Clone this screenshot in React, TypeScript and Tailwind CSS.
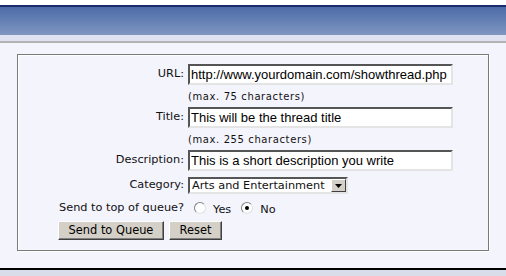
import React from 'react';

const inputCls =
  "h-[21px] w-[265px] border-2 border-t-[#555] border-l-[#555] border-b-[#e4e4e4] border-r-[#e4e4e4] bg-white px-[1px] text-[13px] leading-none text-black outline-none font-['Liberation_Sans',Arial,sans-serif]";

const btnCls =
  "h-[19px] border border-t-white border-l-white border-b-[#404040] border-r-[#404040] bg-[#d4d0c8] text-[11.4px] text-black shadow-[inset_-1px_-1px_0_#808080] font-['DejaVu_Sans',Verdana,sans-serif]";

const Radio = ({ checked }: { checked?: boolean }) => (
  <span className="relative inline-block h-[12px] w-[12px] rounded-full border border-t-[#808080] border-l-[#808080] border-b-[#e0e0e0] border-r-[#e0e0e0] bg-white">
    {checked && <span className="absolute left-[3px] top-[3px] h-[4px] w-[4px] rounded-full bg-black" />}
  </span>
);

const App: React.FC = () => {
  return (
    <div className="flex h-[276px] w-[506px] flex-col overflow-hidden bg-[#f4f4fd] font-['DejaVu_Sans',Verdana,sans-serif] text-[11.3px] text-[#111]">
      {/* header band */}
      <div className="h-[5px] bg-white" />
      <div className="h-[2px] bg-[#1c2c6c]" />
      <div className="h-[28px] bg-gradient-to-b from-[#4d6ba8] to-[#7f96c1]" />
      <div className="h-[6px] bg-[#dfe2f1]" />
      <div className="h-[2px] bg-[#b3b3b3]" />

      <div className="px-[17px] pt-[11px]">
        <div className="h-[197px] border border-[#7a7a7a] shadow-[inset_1px_1px_0_#fff,1px_1px_0_#fff] pl-[40px] pt-[9px]">
          {/* URL */}
          <div className="flex items-center gap-[4px]">
            <span className="w-[126px] text-right">URL:</span>
            <input className={inputCls} defaultValue="http://www.yourdomain.com/showthread.php" />
          </div>
          <div className="flex h-[22px] items-center gap-[4px]">
            <span className="w-[126px]" />
            <span className="text-[10px] tracking-[0.6px]">(max. 75 characters)</span>
          </div>
          {/* Title */}
          <div className="flex items-center gap-[4px]">
            <span className="w-[126px] text-right">Title:</span>
            <input className={inputCls} defaultValue="This will be the thread title" />
          </div>
          <div className="flex h-[22px] items-center gap-[4px]">
            <span className="w-[126px]" />
            <span className="text-[10px] tracking-[0.6px]">(max. 255 characters)</span>
          </div>
          {/* Description */}
          <div className="flex items-center gap-[4px]">
            <span className="w-[126px] text-right">Description:</span>
            <input className={inputCls} defaultValue="This is a short description you write" />
          </div>
          {/* Category */}
          <div className="mt-[6px] flex items-center gap-[4px]">
            <span className="w-[126px] text-right">Category:</span>
            <div className="flex h-[17px] w-[160px] items-center border-2 border-t-[#555] border-l-[#555] border-b-[#e4e4e4] border-r-[#e4e4e4] bg-white">
              <span className="flex-1 pl-[2px] text-[11.3px] leading-none">Arts and Entertainment</span>
              <span className="flex h-[13px] w-[15px] items-center justify-center border border-t-white border-l-white border-b-[#404040] border-r-[#404040] bg-[#d4d0c8]">
                <svg width="7" height="4" viewBox="0 0 7 4"><path d="M0 0h7L3.5 4z" fill="#000" /></svg>
              </span>
            </div>
          </div>
          {/* Radios */}
          <div className="mt-[7px] flex h-[14px] items-center">
            <span className="w-[126px] text-right">Send to top of queue?</span>
            <span className="ml-[10px] flex items-center"><Radio /></span>
            <span className="ml-[7px] mt-[4px]">Yes</span>
            <span className="ml-[10px] flex items-center"><Radio checked /></span>
            <span className="ml-[7px] mt-[4px]">No</span>
          </div>
          {/* Buttons */}
          <div className="mt-[6px] flex gap-[5px]">
            <button className={btnCls + " w-[106px]"}>Send to Queue</button>
            <button className={btnCls + " w-[53px]"}>Reset</button>
          </div>
        </div>
      </div>

      <div className="flex-1" />
      <div className="h-[2px] bg-black" />
      <div className="h-[6px] bg-[#d9dce9]" />
    </div>
  );
};

export default App;
